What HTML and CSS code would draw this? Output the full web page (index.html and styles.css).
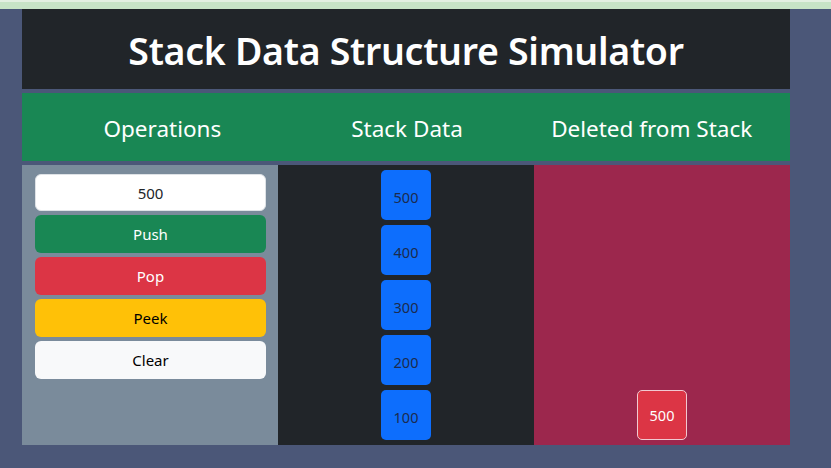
FILE: index.html
```html
<!DOCTYPE html>
<html lang="en">

<head>
    <meta charset="UTF-8">
    <meta name="viewport" content="width=device-width, initial-scale=1.0">
    <title>Stack Simulator</title>
    <link rel="stylesheet" href="styles.css">
</head>

<body>
    <div class="top-strip"></div>

    <div class="container">
        <div class="title-bar">
            <h1>Stack Data Structure Simulator</h1>
        </div>

        <div class="heading-row">
            <div class="heading heading-ops">Operations</div>
            <div class="heading heading-data">Stack Data</div>
            <div class="heading heading-deleted">Deleted from Stack</div>
        </div>

        <div class="main-row">
            <div class="col-ops">
                <input type="text" id="value" class="value-input" value="500">
                <button class="btn btn-push">Push</button>
                <button class="btn btn-pop">Pop</button>
                <button class="btn btn-peek">Peek</button>
                <button class="btn btn-clear">Clear</button>
            </div>

            <div class="col-data" id="stack">
                <div class="stack-item">500</div>
                <div class="stack-item">400</div>
                <div class="stack-item">300</div>
                <div class="stack-item">200</div>
                <div class="stack-item">100</div>
            </div>

            <div class="col-deleted" id="deleted">
                <div class="deleted-item">500</div>
            </div>
        </div>
    </div>
</body>

</html>
```

FILE: styles.css
```css
body {
    margin: 0;
    font-family: "Noto Sans", "Open Sans", sans-serif;
    background-color: #4b5778;
    height: 468px;
    overflow: hidden;
}

.top-strip {
    height: 9px;
    background: linear-gradient(#e3efe1 0, #e3efe1 2px, #c7e3c6 2px);
}

.container {
    width: 768px;
    margin-left: 22px;
}

.title-bar {
    background-color: #212529;
    height: 80px;
    display: flex;
    align-items: center;
    justify-content: center;
    padding-top: 2px;
    box-sizing: border-box;
}

.title-bar h1 {
    margin: 0;
    color: white;
    font-size: 37.5px;
    font-weight: 600;
    letter-spacing: -0.3px;
}

.heading-row {
    margin-top: 4px;
    height: 68px;
    padding-top: 3px;
    box-sizing: border-box;
    background-color: #198754;
    display: flex;
    align-items: center;
}

.heading {
    flex: 1;
    text-align: center;
    color: white;
    font-size: 22.5px;
}

.heading-ops {
    padding-left: 18px;
}

.heading-deleted {
    padding-right: 16px;
}

.main-row {
    margin-top: 4px;
    height: 280px;
    display: flex;
}

.col-ops {
    width: 256px;
    background-color: #7a8b9b;
    padding: 9px 12px 0 13px;
    box-sizing: border-box;
    display: flex;
    flex-direction: column;
    gap: 4px;
}

.value-input,
.btn {
    height: 38px;
    border-radius: 6px;
    font-family: inherit;
    font-size: 15px;
    text-align: center;
    box-sizing: border-box;
    border: 1px solid transparent;
    color: white;
}

.value-input {
    height: 37px;
    background: white;
    border-color: #dee2e6;
    color: #212529;
}

.btn-push {
    background-color: #198754;
}

.btn-pop {
    background-color: #dc3545;
}

.btn-peek {
    background-color: #ffc107;
    color: #000;
}

.btn-clear {
    background-color: #f8f9fa;
    color: #000;
}

.col-data {
    width: 256px;
    background-color: #212529;
    display: flex;
    flex-direction: column;
    align-items: center;
    padding-top: 5px;
    gap: 5px;
    box-sizing: border-box;
}

.stack-item {
    width: 50px;
    height: 50px;
    padding-top: 3px;
    box-sizing: border-box;
    background-color: #0d6efd;
    border-radius: 5px;
    display: flex;
    align-items: center;
    justify-content: center;
    color: #1c2b4d;
    font-size: 14.5px;
}

.col-deleted {
    width: 256px;
    background-color: #9c274d;
    display: flex;
    flex-direction: column;
    justify-content: flex-end;
    align-items: center;
    padding-bottom: 5px;
    box-sizing: border-box;
}

.deleted-item {
    width: 50px;
    height: 50px;
    background-color: #dc3545;
    border: 1px solid #f1c9d0;
    border-radius: 5px;
    box-sizing: border-box;
    display: flex;
    align-items: center;
    justify-content: center;
    color: white;
    font-size: 14.5px;
}
```
